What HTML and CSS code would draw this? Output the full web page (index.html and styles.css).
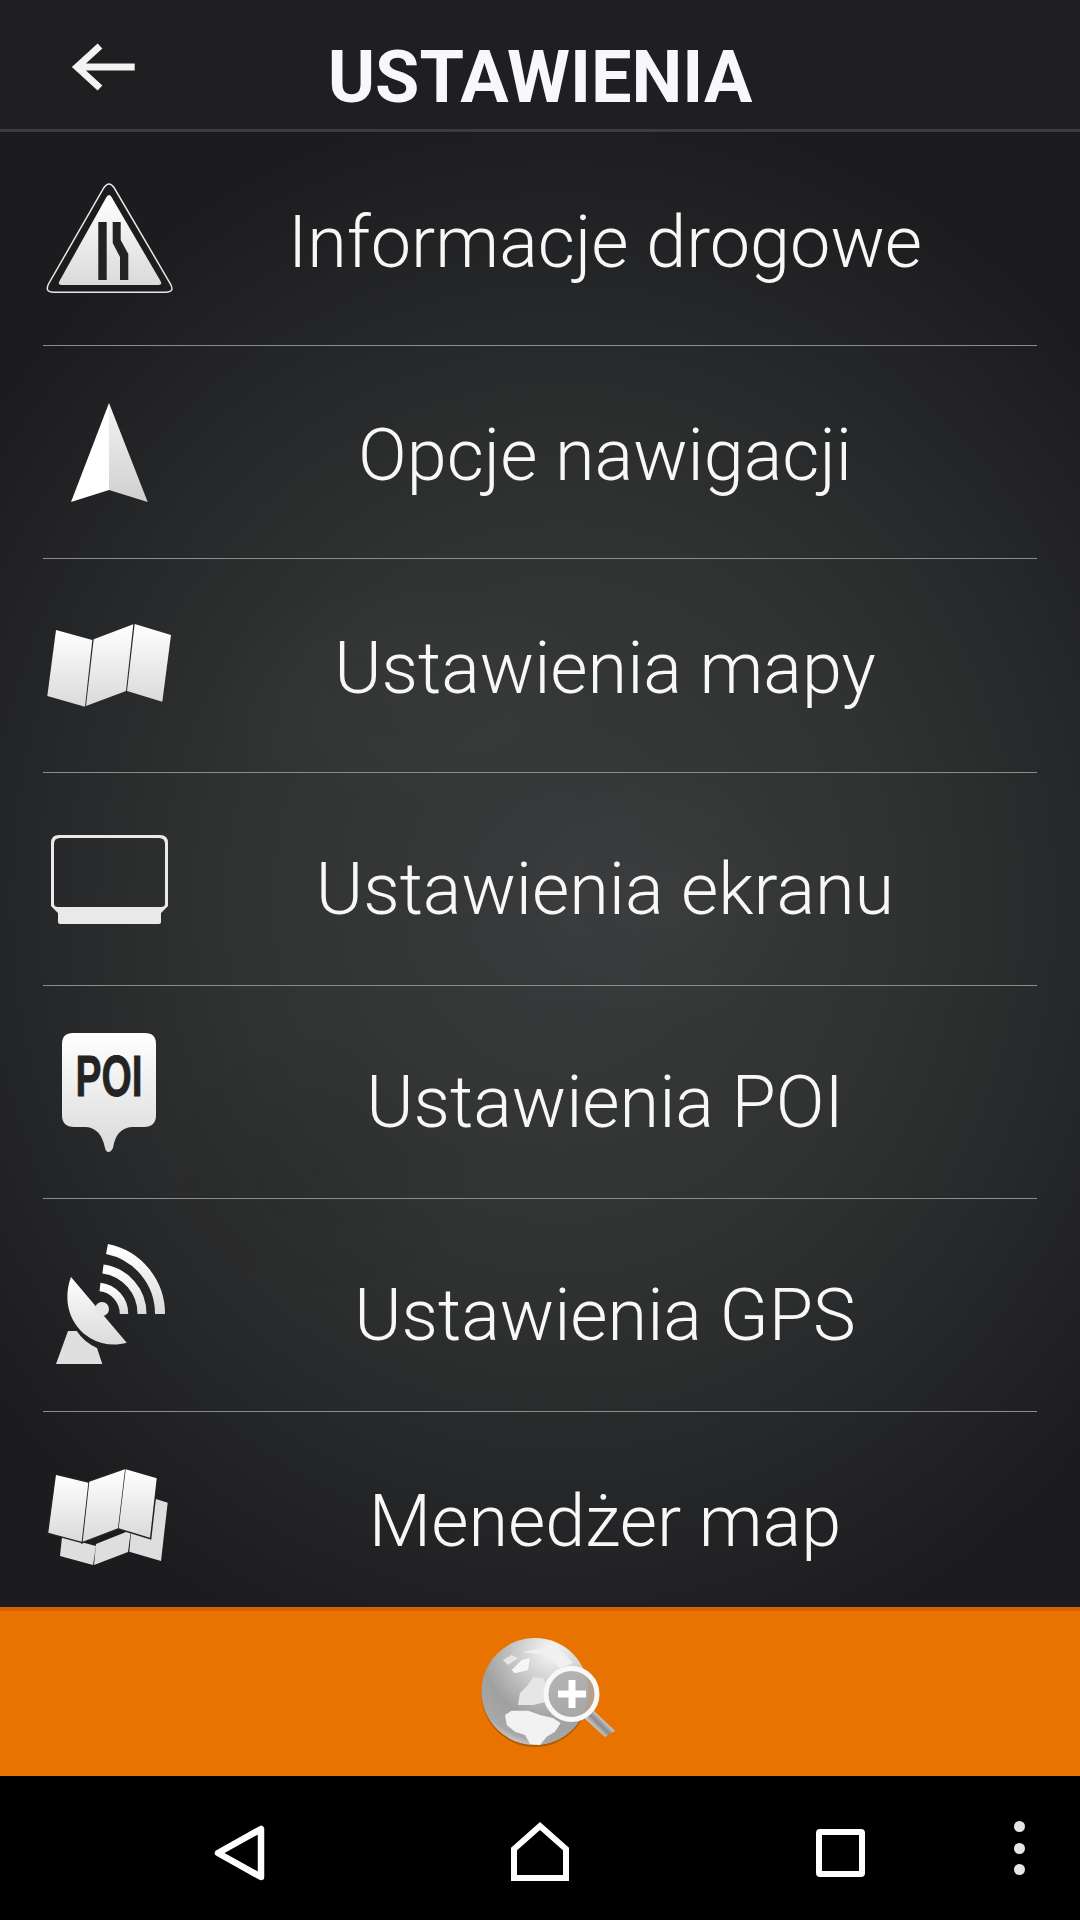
FILE: index.html
```html
<!DOCTYPE html>
<html lang="pl">
  <head>
    <meta charset="UTF-8" />
    <title>Ustawienia</title>
    <link rel="stylesheet" href="styles.css">
  </head>
  <body>
    <div class="app">
      <div class="topbar">
        <svg class="back" width="70" height="56" viewBox="69 39 70 56">
          <path d="M134.700 67H81M100 46L77 67L100 88" fill="none" stroke="#f4f3f4" stroke-width="7"/>
        </svg>
        <h1 class="title">USTAWIENIA</h1>
      </div>

      <div class="list">
        <div class="row">
          <svg class="icon" width="130" height="213" viewBox="43 133 130 213">
            <defs>
              <linearGradient id="paper" x1="0" y1="0" x2="0" y2="1">
                <stop offset="0" stop-color="#ffffff"/>
                <stop offset="1" stop-color="#dadada"/>
              </linearGradient>
              <linearGradient id="wing" x1="0" y1="0" x2="0" y2="1">
                <stop offset="0" stop-color="#f4f4f4"/>
                <stop offset="1" stop-color="#cfcfcf"/>
              </linearGradient>
              <radialGradient id="globe" cx="0.66" cy="0.12" r="0.95">
                <stop offset="0" stop-color="#f8f8f8"/>
                <stop offset="0.4" stop-color="#c4c4c4"/>
                <stop offset="0.68" stop-color="#a0a0a0"/>
                <stop offset="0.9" stop-color="#a8a8a8"/>
                <stop offset="1" stop-color="#dcdcdc"/>
              </radialGradient>
              <linearGradient id="handle" gradientUnits="userSpaceOnUse" x1="592" y1="1732" x2="606" y2="1718">
                <stop offset="0" stop-color="#ffffff"/>
                <stop offset="0.55" stop-color="#8a8a8a"/>
                <stop offset="1" stop-color="#e8e8e8"/>
              </linearGradient>
            </defs>
            <path d="M104 187.500Q109 180.500 114 187.500L170.500 284Q175 292.300 165.500 292.300H53.500Q44.500 292.300 48.500 284Z" fill="none" stroke="#e6e6e6" stroke-width="1.500"/>
            <path d="M106.500 197Q109 193 111.500 197L160.500 281Q162.500 285 158.500 285H61.500Q57.500 285 59.500 281Z" fill="url(#paper)"/>
            <path d="M98.300 222H106.700V280H98.300ZM112.700 222H120.700V240L128.300 254V280H120V257L112.700 243Z" fill="#232323"/>
          </svg>
          <div class="label">Informacje drogowe</div>
        </div>

        <div class="row">
          <svg class="icon" width="130" height="213" viewBox="43 346 130 213">
            <path d="M109 403V490L71 502Z" fill="#ffffff"/>
            <path d="M109 403V490L147.700 502Z" fill="url(#wing)"/>
          </svg>
          <div class="label">Opcje nawigacji</div>
        </div>

        <div class="row">
          <svg class="icon" width="130" height="213" viewBox="43 559 130 213">
            <path d="M56 630L92.300 640L85 706.700L47.300 696Z" fill="url(#paper)"/>
            <path d="M93.700 639.300L133.300 624.300L126 691L86 706Z" fill="url(#paper)"/>
            <path d="M134.700 624L171 635L162.300 701.700L127 691Z" fill="url(#paper)"/>
          </svg>
          <div class="label">Ustawienia mapy</div>
        </div>

        <div class="row">
          <svg class="icon" width="130" height="213" viewBox="43 772 130 213">
            <path fill-rule="evenodd" fill="#e9e9e9" d="M59 834H160Q168 834 168 842V905L161 912V921Q161 923 159 923H60Q58 923 58 921V912L51 905V842Q51 834 59 834ZM60 837Q54 837 54 843V903Q54 906 58 906H161Q165 906 165 903V843Q165 837 159 837Z"/>
          </svg>
          <div class="label label-low">Ustawienia ekranu</div>
        </div>

        <div class="row">
          <svg class="icon" width="130" height="213" viewBox="43 985 130 213">
            <path d="M73 1032H145Q156 1032 156 1043V1114Q156 1126 144 1126H132Q116 1127 113 1147Q111 1151 108.500 1151Q106 1151 105 1147Q101 1127 86 1126H74Q62 1126 62 1114V1043Q62 1032 73 1032Z" fill="url(#paper)"/>
            <text class="poi" x="75.500" y="1095" textLength="67" lengthAdjust="spacingAndGlyphs">POI</text>
          </svg>
          <div class="label label-low">Ustawienia POI</div>
        </div>

        <div class="row">
          <svg class="icon" width="130" height="213" viewBox="43 1198 130 213">
            <path d="M71 1276C62 1300 70 1325 90 1337C102 1344 115 1345 126.700 1341.700Z" fill="url(#paper)"/>
            <circle cx="102" cy="1308" r="7" fill="#e8e8e8"/>
            <path d="M68 1330H76.700Q84 1341 97 1347L102.300 1363H56Z" fill="#dfdfdf"/>
            <g fill="none" stroke="url(#paper)">
              <path d="M100 1286A27 27 0 0 1 124 1313" stroke-width="8.500"/>
              <path d="M103 1268A45 45 0 0 1 142 1313" stroke-width="9"/>
              <path d="M107 1248A66 66 0 0 1 160 1313" stroke-width="10"/>
            </g>
          </svg>
          <div class="label label-low">Ustawienia GPS</div>
        </div>

        <div class="row row-last">
          <svg class="icon" width="130" height="195" viewBox="43 1412 130 195">
            <g fill="#dedede">
              <path d="M62 1537L96 1546L93 1565L60 1556Z"/>
              <path d="M96 1544L131 1530L128 1552L94 1565Z"/>
              <path d="M156 1499L167.700 1502.700L161 1561L129.300 1551.700L131 1533Z"/>
            </g>
            <path d="M56 1475L88.300 1482.700L81.700 1541.700L48.300 1532.700ZM89.300 1481.700L125 1469.300L118 1528.300L82.700 1541.700ZM125.700 1469.300L156.700 1478.300L150 1537.700L118.700 1528.300Z" fill="#222223" stroke="#222223" stroke-width="3"/>
            <path d="M56 1475L88.300 1482.700L81.700 1541.700L48.300 1532.700Z" fill="url(#paper)"/>
            <path d="M89.300 1481.700L125 1469.300L118 1528.300L82.700 1541.700Z" fill="url(#paper)"/>
            <path d="M125.700 1469.300L156.700 1478.300L150 1537.700L118.700 1528.300Z" fill="url(#paper)"/>
          </svg>
          <div class="label">Menedżer map</div>
        </div>
      </div>

      <div class="zoombar">
        <svg width="150" height="165" viewBox="465 1611 150 165">
          <circle cx="535" cy="1693.500" r="53.500" fill="#9c4e00" opacity="0.7"/>
          <circle cx="535" cy="1691.500" r="53.500" fill="url(#globe)"/>
          <g fill="#e6e6e6">
            <path d="M520 1693L528 1685L533 1677L543 1678L548 1687L545 1692L546 1702L533 1705L518 1705Z"/>
            <path d="M505 1715L511.700 1710.700L528.300 1710.700L540 1715L553 1718L560.700 1723L555 1731.700L546.700 1736.700L540 1745L530 1744L525 1735L515 1731.700L506.700 1725Z" fill="#f2f2f2"/>
            <path d="M503 1660L511.700 1655L518 1658L508 1665Z"/>
            <path d="M511.700 1670L521.700 1660L530 1658L528 1670L515 1673.300Z" fill="#f6f6f6"/>
            <path d="M523 1652L547 1647L563 1653L573 1663L560 1668L545 1655Z" fill="#f0f0f0"/>
          </g>
          <path d="M591 1708L615 1731L605 1737L582 1716Z" fill="url(#handle)"/>
          <circle cx="571.500" cy="1694" r="25.500" fill="#aaaaaa" fill-opacity="0.8" stroke="#f8f8f8" stroke-width="5"/>
          <path d="M558 1694H586M572 1680V1708" stroke="#ffffff" stroke-width="7" fill="none"/>
        </svg>
      </div>

      <div class="nav">
        <svg class="nav-btn" width="60" height="70" viewBox="210 1818 60 70">
          <path d="M218 1853L261 1829V1877Z" fill="none" stroke="#fff" stroke-width="6.500" stroke-linejoin="round"/>
        </svg>
        <svg class="nav-btn" width="70" height="70" viewBox="505 1818 70 70">
          <path d="M540 1826L566 1849V1878H514V1849Z" fill="none" stroke="#fff" stroke-width="6"/>
        </svg>
        <svg class="nav-btn" width="60" height="60" viewBox="810 1823 60 60">
          <rect x="819" y="1832" width="43" height="42" rx="1" fill="none" stroke="#fff" stroke-width="6"/>
        </svg>
        <div class="dots">
          <span></span>
          <span></span>
          <span></span>
        </div>
      </div>
    </div>
  </body>
</html>
```

FILE: styles.css
```css
* {
  box-sizing: border-box;
  margin: 0;
  padding: 0;
}
body {
  width: 1080px;
  height: 1920px;
  background-color: #000;
  font-family: Roboto, "Noto Sans", sans-serif;
  overflow: hidden;
}
.app {
  display: flex;
  flex-direction: column;
  height: 1920px;
}

/* top bar */
.topbar {
  display: grid;
  grid-template-columns: 1fr auto 1fr;
  height: 132px;
  background-color: #1f1e21;
  border-bottom: 3px solid #3c3c3e;
}
.back {
  margin: 39px 0 0 69px;
}
.title {
  font-size: 72px;
  font-weight: 700;
  line-height: 155px;
  color: #f8f7f9;
}

/* menu list */
.list {
  flex: 1;
  padding: 1px 43px 0;
  background-color: #1d1d1f;
  background-image:
    radial-gradient(ellipse 14% 9% at 62% 52%, rgba(255, 255, 255, 0.025), transparent),
    radial-gradient(ellipse 20% 8% at 38% 38%, rgba(255, 255, 255, 0.015), transparent),
    radial-gradient(ellipse 16% 10% at 30% 70%, rgba(0, 0, 0, 0.06), transparent),
    radial-gradient(ellipse 66% 54% at 52% 52%, #393a3b 0%, #313333 45%, #272829 72%, #1c1c1e 100%);
}
.row {
  display: flex;
  height: 213.2px;
  border-bottom: 1px solid #8b8c8c;
}
.row-last {
  height: 195px;
  border-bottom: 0;
}
.icon {
  flex: none;
}
.label {
  flex: 1;
  padding-top: 3px;
  font-size: 72px;
  font-weight: 300;
  line-height: 213px;
  text-align: center;
  color: #f7f7f7;
}
.label-low {
  padding-top: 10px;
}
.poi {
  font-family: "Liberation Sans", sans-serif;
  font-size: 57px;
  font-weight: 700;
  fill: #232323;
  stroke: #232323;
  stroke-width: 0.8;
}

/* orange bar with the map zoom button */
.zoombar {
  display: flex;
  justify-content: center;
  height: 169px;
  background-color: #e87300;
  border-top: 4px solid #dd6100;
}

/* android buttons */
.nav {
  display: grid;
  grid-template-columns: 300px 300px 300px 58px;
  justify-items: center;
  align-items: center;
  height: 144px;
  padding-left: 90px;
  background-color: #000;
}
.nav-btn {
  margin-top: 10px;
}
.dots {
  display: flex;
  flex-direction: column;
  gap: 10.5px;
}
.dots span {
  width: 11px;
  height: 11px;
  border-radius: 50%;
  background-color: #e6e6e6;
}
```
